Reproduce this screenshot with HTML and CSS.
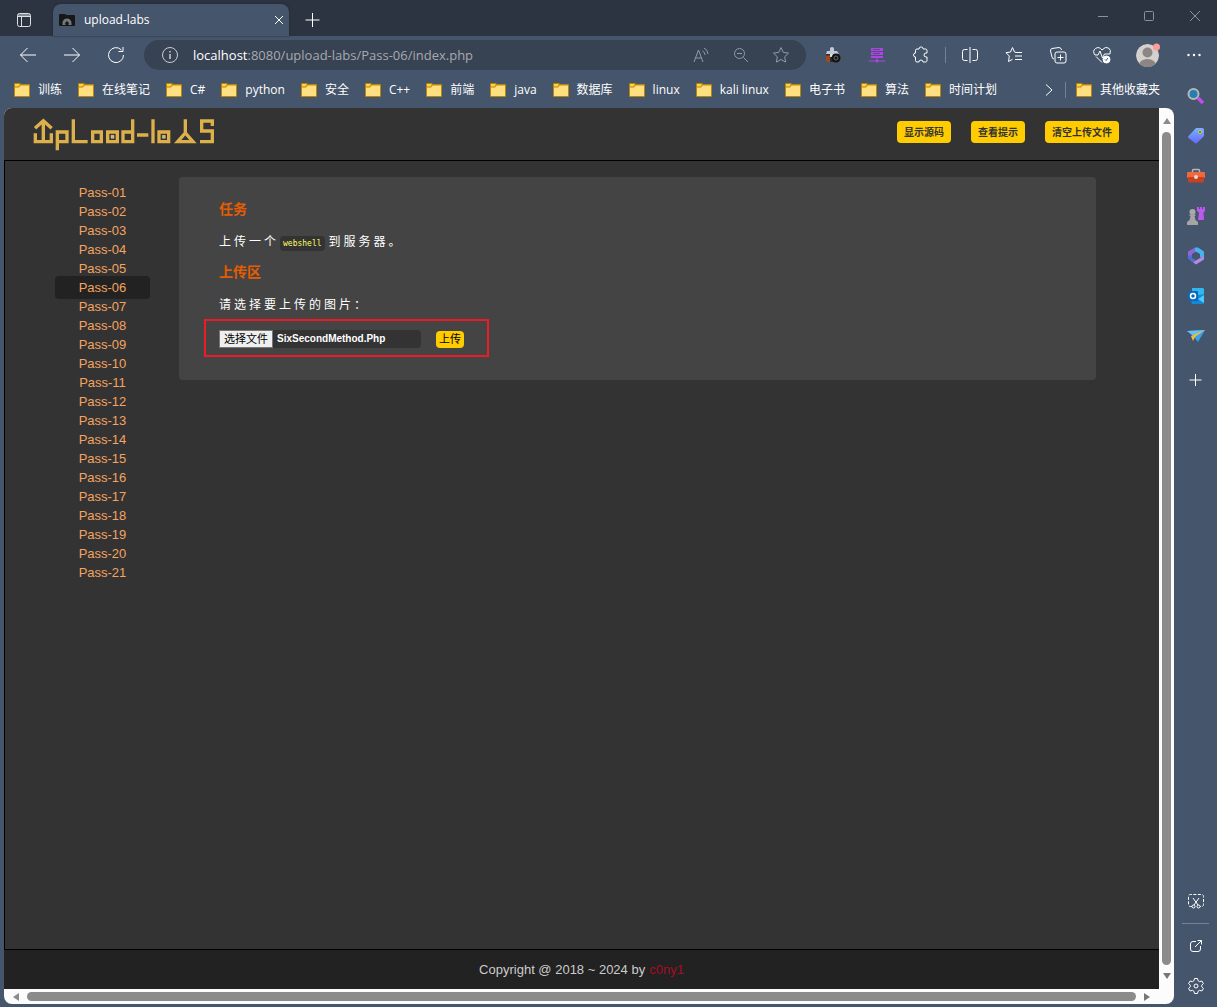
FILE: index.html
```html
<!DOCTYPE html>
<html lang="zh-CN">
<head>
<meta charset="utf-8">
<meta name="viewport" content="width=device-width, initial-scale=1">
<title>upload-labs</title>
<link rel="stylesheet" href="styles.css">
</head>
<body>
<svg class="defs" aria-hidden="true">
  <symbol id="folder" viewBox="0 0 16 14">
    <path d="M0 1q0-1 1-1h5l1 1h8q1 0 1 1V13q0 1-1 1H1q-1 0-1-1z" fill="#b8860b"/>
    <path d="M1 1h4.500v1.500L4.500 3.500H1z" fill="#ffd23c"/>
    <path d="M1 4.500h4L6.500 2.500H15V13H1z" fill="#ffdf80"/>
  </symbol>
</svg>

<header class="tabstrip">
  <button class="icon-btn workspace" aria-label="标签页操作"><svg width="16" height="16" viewBox="0 0 16 16"><rect x="1.500" y="1.500" width="13" height="13" rx="2"/><path d="M2 3h12M2 4.500h12M5.500 5v9"/></svg></button>
  <div class="tab">
    <svg width="16" height="14" viewBox="0 0 16 14" class="solid"><path d="M0 2q0-1 1-1h5l1 1h8q1 0 1 1v9q0 1-1 1H1q-1 0-1-1z" fill="#15171a"/><path d="M3.500 12V10a4.500 4.500 0 0 1 9 0v2h-3v-1.500h1L8 8l-2.500 2.500h1V12z" fill="#777"/></svg>
    <span class="tab-title">upload-labs</span>
    <button class="tab-close" aria-label="关闭标签页"><svg width="10" height="10" viewBox="0 0 10 10"><path d="M1 1l8 8M9 1l-8 8"/></svg></button>
  </div>
  <button class="icon-btn new-tab" aria-label="新建标签页"><svg width="16" height="16" viewBox="0 0 16 16"><path d="M7.500 1v14M0.500 8h14"/></svg></button>
  <div class="window-controls">
    <button aria-label="最小化"><svg width="12" height="12" viewBox="0 0 12 12"><path d="M1 6.500h10"/></svg></button>
    <button aria-label="最大化"><svg width="12" height="12" viewBox="0 0 12 12"><rect x="1.500" y="1.500" width="9" height="9" rx="1"/></svg></button>
    <button aria-label="关闭"><svg width="12" height="12" viewBox="0 0 12 12"><path d="M1 1l10 10M11 1L1 11"/></svg></button>
  </div>
</header>

<div class="toolbar">
  <button class="icon-btn" aria-label="后退"><svg width="18" height="18" viewBox="0 0 18 18"><path d="M17 9H1.500M8.500 2l-7 7 7 7"/></svg></button>
  <button class="icon-btn" aria-label="前进"><svg width="18" height="18" viewBox="0 0 18 18"><path d="M1 9h15.500M9.500 2l7 7-7 7"/></svg></button>
  <button class="icon-btn" aria-label="刷新"><svg width="18" height="18" viewBox="0 0 18 18"><path d="M16.500 9A7.500 7.500 0 1 1 14.500 4M16 1v4.500h-4.500"/></svg></button>
  <div class="address">
    <svg class="site-info" width="18" height="18" viewBox="0 0 18 18"><circle cx="9" cy="9" r="7.500"/><path d="M9 8v5M9 5v1.500" stroke-width="1.500"/></svg>
    <p class="url"><b>localhost</b>:8080/upload-labs/Pass-06/index.php</p>
    <button aria-label="朗读此页"><svg width="16" height="16" viewBox="0 0 16 16"><path d="M1 15L5.500 3 10 15M2.500 11h6M9.500 4a4 4 0 0 1 2.500 4M11 1a7 7 0 0 1 4 6"/></svg></button>
    <button aria-label="缩放"><svg width="16" height="16" viewBox="0 0 16 16"><circle cx="6.500" cy="6.500" r="5"/><path d="M4 6.500h5M10.500 10.500l4.500 4.500"/></svg></button>
    <button aria-label="收藏"><svg width="18" height="18" viewBox="0 0 18 18"><path d="M9 1.500l2.300 4.900 5.200.7-3.800 3.700.9 5.300L9 13.500l-4.600 2.600.9-5.300L1.500 7.100l5.200-.7z"/></svg></button>
  </div>
  <div class="extensions">
    <button class="icon-btn" aria-label="相机扩展"><svg class="solid" width="16" height="16" viewBox="0 0 16 16"><path d="M5 1.500Q5 0 7 0t2 1.500V4h3l2 3H1l1-3h3z" fill="#c3c9da"/><path d="M1 7h13v7q0 1-1 1H2q-1 0-1-1z" fill="#332a2a"/><path d="M1 8.500h4V15H2q-1 0-1-1z" fill="#984b20"/><path d="M5 7h3v3H5z" fill="#d9deea"/><circle cx="11" cy="11" r="4.500" fill="#151515"/><circle cx="11" cy="11" r="2" fill="none" stroke="#666"/></svg></button>
    <button class="icon-btn" aria-label="代理扩展"><svg class="solid" width="16" height="16" viewBox="0 0 16 16"><path d="M2 1h12v3H2zM2 5h12v3H2zM2 9h12v2H2zM7.500 11h1v2h-1zM0 13.500h16v1H0z" fill="#ad45e6"/><circle cx="8" cy="14" r="1.500" fill="#ad45e6"/><path d="M4 2.500h7M4 6.500h7" stroke="#68408f"/></svg></button>
    <button class="icon-btn" aria-label="扩展"><svg width="18" height="18" viewBox="0 0 18 18"><path d="M3.500 4.500q0-1.500 1.500-1.500h2a2.100 2.100 0 0 1 4.200 0h2.300q1.500 0 1.500 1.500V7h-1a2 2 0 0 0 0 4h1v3.500q0 1.500-1.500 1.500H11a2 2 0 0 0-4 0H5q-1.500 0-1.500-1.500V11a2 2 0 0 1 0-4z"/></svg></button>
  </div>
  <span class="divider"></span>
  <div class="browser-tools">
    <button class="icon-btn" aria-label="分屏"><svg width="18" height="18" viewBox="0 0 18 18"><path d="M6.500 3.500h-3q-2 0-2 2v7q0 2 2 2h3M11.500 3.500h3q2 0 2 2v7q0 2-2 2h-3M9 1v16"/></svg></button>
    <button class="icon-btn" aria-label="收藏夹"><svg width="18" height="18" viewBox="0 0 18 18"><path d="M11 6.500L9.500 6 7.500 1.500 5.500 6l-4.500.7L4.300 10l-.8 5.500 4-2.200M11 6.500h6M10 10h7M10 13.500h7"/></svg></button>
    <button class="icon-btn" aria-label="集锦"><svg width="18" height="18" viewBox="0 0 18 18"><path d="M5 13q-1.500 0-2-2L1.500 5q-.3-2 1.500-2.500L10 1.500q2 0 2.500 2.500"/><rect x="6" y="6" width="11" height="11" rx="2"/><path d="M11.500 8.500v6M8.500 11.500h6"/></svg></button>
    <button class="icon-btn" aria-label="浏览器概要"><svg width="18" height="18" viewBox="0 0 18 18"><path d="M9 4Q6 0 2.500 2.500T2 9h3l2-4 2.500 7 2-4H17q1.500-4-1.500-6T9 4M3 10.500l6 6"/><circle cx="13.500" cy="13.500" r="3.500" fill="#fff"/><path d="M12 13.500l1 1 2-2.500" stroke="#45556b"/></svg></button>
    <button class="icon-btn profile" aria-label="用户资料"><svg class="solid" width="24" height="24" viewBox="0 0 24 24"><defs><clipPath id="face"><circle cx="11.500" cy="12.500" r="11.500"/></clipPath></defs><g clip-path="url(#face)"><circle cx="11.500" cy="12.500" r="11.500" fill="#d3d0cd"/><circle cx="11.500" cy="9.500" r="5" fill="#8b8683"/><ellipse cx="11.500" cy="22" rx="8.500" ry="6" fill="#8b8683"/></g><circle cx="20.500" cy="4" r="3.500" fill="#ff9c96"/></svg></button>
    <button class="icon-btn" aria-label="更多"><svg class="solid" width="16" height="16" viewBox="0 0 16 16"><g fill="#fff"><circle cx="2.500" cy="8" r="1.200"/><circle cx="8" cy="8" r="1.200"/><circle cx="13.500" cy="8" r="1.200"/></g></svg></button>
  </div>
</div>

<div class="workspace-row">
  <div class="content">
    <nav class="bookmarks" aria-label="收藏夹栏">
      <a href="#"><svg><use href="#folder"/></svg>训练</a>
      <a href="#"><svg><use href="#folder"/></svg>在线笔记</a>
      <a href="#"><svg><use href="#folder"/></svg>C#</a>
      <a href="#"><svg><use href="#folder"/></svg>python</a>
      <a href="#"><svg><use href="#folder"/></svg>安全</a>
      <a href="#"><svg><use href="#folder"/></svg>C++</a>
      <a href="#"><svg><use href="#folder"/></svg>前端</a>
      <a href="#"><svg><use href="#folder"/></svg>java</a>
      <a href="#"><svg><use href="#folder"/></svg>数据库</a>
      <a href="#"><svg><use href="#folder"/></svg>linux</a>
      <a href="#"><svg><use href="#folder"/></svg>kali linux</a>
      <a href="#"><svg><use href="#folder"/></svg>电子书</a>
      <a href="#"><svg><use href="#folder"/></svg>算法</a>
      <a href="#"><svg><use href="#folder"/></svg>时间计划</a>
      <div class="bookmarks-end">
        <button aria-label="更多收藏"><svg width="8" height="12" viewBox="0 0 8 12"><path d="M1 0.500L7 6l-6 5.500"/></svg></button>
        <span class="divider"></span>
        <a href="#"><svg><use href="#folder"/></svg>其他收藏夹</a>
      </div>
    </nav>

    <div class="viewport">
      <div class="page">
        <div class="page-head">
          <a href="#" class="logo" aria-label="upload-labs">
            <svg width="184" height="35" viewBox="96 50 552 105">
              <g fill="none" stroke="#ddb04b" stroke-width="10">
                <path d="M106 99v25h48V99M130 62v62M105 84l25-23 25 23"/>
                <path d="M172 150V95h29v29h-29"/>
                <path d="M220 57v67h43"/>
                <path d="M278 95h26v29h-26z"/>
                <path d="M323 95h29v29h-29z"/>
                <path d="M398 57v67h-29V95h29"/>
                <path d="M411 104h34M459 57v72"/>
                <path d="M477 95h29v29h-29z"/>
                <path d="M556 57v40M533 124l23-26 23 26z"/>
                <path d="M637 77V62h-32v30h32v32h-37"/>
              </g>
              <path d="M333 105h9v9h-9zM487 105h9v9h-9z" fill="#ddb04b"/>
            </svg>
          </a>
          <div class="head-actions">
            <button>显示源码</button>
            <button>查看提示</button>
            <button>清空上传文件</button>
          </div>
        </div>

        <div class="page-body">
          <ul class="menu">
            <li><a href="#">Pass-01</a></li>
            <li><a href="#">Pass-02</a></li>
            <li><a href="#">Pass-03</a></li>
            <li><a href="#">Pass-04</a></li>
            <li><a href="#">Pass-05</a></li>
            <li><a href="#" class="current" aria-current="page">Pass-06</a></li>
            <li><a href="#">Pass-07</a></li>
            <li><a href="#">Pass-08</a></li>
            <li><a href="#">Pass-09</a></li>
            <li><a href="#">Pass-10</a></li>
            <li><a href="#">Pass-11</a></li>
            <li><a href="#">Pass-12</a></li>
            <li><a href="#">Pass-13</a></li>
            <li><a href="#">Pass-14</a></li>
            <li><a href="#">Pass-15</a></li>
            <li><a href="#">Pass-16</a></li>
            <li><a href="#">Pass-17</a></li>
            <li><a href="#">Pass-18</a></li>
            <li><a href="#">Pass-19</a></li>
            <li><a href="#">Pass-20</a></li>
            <li><a href="#">Pass-21</a></li>
          </ul>
          <main class="panel">
            <h3>任务</h3>
            <p>上传一个<code>webshell</code>到服务器。</p>
            <h3>上传区</h3>
            <form>
              <p>请选择要上传的图片：</p>
              <div class="upload-row">
                <label class="file"><input type="file"><span class="file-btn">选择文件</span><span class="file-name">SixSecondMethod.Php</span></label>
                <button type="button">上传</button>
              </div>
            </form>
          </main>
        </div>

        <footer class="page-foot">Copyright @ 2018 ~ 2024 by <a href="#">c0ny1</a></footer>
      </div>

      <div class="scroll-y"><svg viewBox="0 0 8 6"><path d="M4 0l4 6H0z"/></svg><span class="thumb"></span><svg viewBox="0 0 8 6"><path d="M4 6l4-6H0z"/></svg></div>
      <div class="scroll-x"><svg viewBox="0 0 6 8"><path d="M0 4l6-4v8z"/></svg><span class="thumb"></span><svg viewBox="0 0 6 8"><path d="M6 4L0 0v8z"/></svg></div>
    </div>
  </div>

  <aside class="sidebar" aria-label="侧边栏">
    <button aria-label="搜索"><svg class="solid" width="18" height="18" viewBox="0 0 18 18"><path d="M11 11l5 5" stroke="#c54bf0" stroke-width="3.500"/><circle cx="6.500" cy="7" r="5" fill="#2380b5" stroke="#b9b7b5" stroke-width="2"/></svg></button>
    <button aria-label="购物"><svg class="solid" width="18" height="18" viewBox="0 0 18 18"><defs><linearGradient id="tag" x1="0" y1="0" x2="0" y2="1"><stop stop-color="#75b5ff"/><stop offset="1" stop-color="#6868fa"/></linearGradient></defs><path d="M9 1h6q2 0 2 2v6l-7 7q-1 1-2 0L1.500 11q-1-1 0-2z" fill="url(#tag)"/><circle cx="13" cy="5" r="1.500" fill="#516079" stroke="#efc42e"/></svg></button>
    <button aria-label="工具"><svg class="solid" width="18" height="18" viewBox="0 0 18 18"><path d="M5.500 5V3.500q0-1 1-1h5q1 0 1 1V5" fill="none" stroke="#b7b7b7" stroke-width="1.500"/><rect y="5" width="18" height="6" rx="1" fill="#f0683e"/><path d="M1 10h16v4q0 1.500-1.500 1.500h-13Q1 15.500 1 14z" fill="#c9401f"/><circle cx="9" cy="10" r="2" fill="#ddd"/></svg></button>
    <button aria-label="游戏"><svg class="solid" width="18" height="18" viewBox="0 0 18 18"><path d="M10 0h2v2h1V0h2v2h1V0h2v4l-1.500 1.500L17 13h-6l1-7.500L10 4z" fill="#bd58ef"/><circle cx="5.500" cy="5" r="3" fill="#aaa"/><path d="M2.500 7.500h6v1.500H7.500l1 4 2.500 2v3H0v-3l2.500-2 1-4h-1z" fill="#a5a5a5"/></svg></button>
    <button aria-label="Microsoft 365"><svg class="solid" width="18" height="18" viewBox="0 0 18 18"><path d="M8 .5L1 4.500v7l4 2V7l6-3.500z" fill="#8b66d5"/><path d="M8 .5h3l6 4V12l-4-2V7L8 4z" fill="#45b4ec"/><path d="M3 13l6 4.500 8-5V9l-4 2-4 2.500-4-2z" fill="#b28be0"/><path d="M1 9l4-1v3l4 2.500-3 2-5-4z" fill="#526dd0"/></svg></button>
    <button aria-label="Outlook"><svg class="solid" width="18" height="18" viewBox="0 0 18 18"><path d="M5 1h11l1 1v6H5z" fill="#31b6f1"/><path d="M3 10l14-3v9q0 1-1 1H5z" fill="#1687d8"/><path d="M17 8v8l-6-4z" fill="#4dccf7"/><rect x="1" y="4" width="10" height="10" rx="1" fill="#0869ba"/><circle cx="6" cy="9" r="2.500" fill="none" stroke="#fff" stroke-width="1.500"/></svg></button>
    <button aria-label="拖放"><svg class="solid" width="18" height="18" viewBox="0 0 18 18"><path d="M0 4l18-1-7 12-4-5z" fill="#35a1ef"/><path d="M0 4l18-1L7 9z" fill="#63c2ef"/><path d="M18 3L4 9l2 5 2-4z" fill="#f5b83b"/></svg></button>
    <button class="customize" aria-label="自定义"><svg width="14" height="14" viewBox="0 0 14 14"><path d="M6.500 1v12M0.500 7h12"/></svg></button>
    <div class="sidebar-end">
      <button aria-label="截图"><svg width="18" height="18" viewBox="0 0 18 18"><path d="M5 14.500H3.500q-2 0-2-2v-8q0-2 2-2h11q2 0 2 2v8q0 2-2 2H13" stroke-dasharray="3 1.500"/><path d="M6 6l5 7M12 6l-5 7"/><circle cx="6.500" cy="14.500" r="1.500"/><circle cx="11.500" cy="14.500" r="1.500"/></svg></button>
      <hr>
      <button aria-label="在新窗口打开"><svg width="14" height="14" viewBox="0 0 14 14"><path d="M7 2.500H4q-2.500 0-2.500 2.500v5q0 2.500 2.500 2.500h5q2.500 0 2.500-2.500V7M8.500 1.500h4v4M12.500 1.500L6 8"/></svg></button>
      <button aria-label="设置"><svg width="18" height="18" viewBox="0 0 18 18"><path d="M7.500 1.500h3l.6 2.300 1.500.9 2.300-.7 1.500 2.600L14.700 8.200v1.600l1.700 1.600-1.500 2.600-2.300-.7-1.500.9-.6 2.300h-3l-.6-2.300-1.500-.9-2.300.7-1.500-2.600 1.700-1.600V8.200L1.600 6.600 3.100 4l2.300.7 1.500-.9z"/><circle cx="9" cy="9" r="2"/></svg></button>
    </div>
  </aside>
</div>
</body>
</html>
```

FILE: styles.css
```css
* { box-sizing: border-box; }

body {
  margin: 0;
  min-height: 100vh;
  display: flex;
  flex-direction: column;
  background: #45556b;
  color: #fff;
  font: 12px/16px "Open Sans", "Noto Sans CJK SC", sans-serif;
}

button {
  margin: 0;
  padding: 0;
  border: 0;
  background: none;
  color: inherit;
  font: inherit;
  display: flex;
  align-items: center;
  justify-content: center;
}

a { color: inherit; text-decoration: none; }

svg { flex: none; fill: none; stroke: currentColor; }
svg.solid { stroke: none; }
.defs { display: none; }

/* Tab strip */
.tabstrip {
  height: 36px;
  display: flex;
  align-items: flex-end;
  background: #2b3440;
}
.icon-btn { width: 44px; height: 32px; }
.workspace { margin: 0 7px 0 2px; color: #dde1e6; }
.tab {
  width: 236px;
  height: 32px;
  padding: 0 4px 0 6px;
  display: flex;
  align-items: center;
  gap: 9px;
  border-radius: 8px 8px 0 0;
  background: #45556b;
  box-shadow: 0 0 2px #1c232c;
}
.tab-title { flex: 1; }
.tab-close { width: 12px; height: 20px; }
.new-tab { margin-left: 2px; }
.window-controls {
  margin: 0 -1px 0 auto;
  align-self: flex-start;
  display: flex;
  color: #8b929b;
}
.window-controls button { width: 46px; height: 32px; }

/* Toolbar */
.toolbar {
  padding: 4px 1px 2px 6px;
  display: flex;
  align-items: center;
}
.toolbar .icon-btn { height: 30px; }
.address {
  flex: 1;
  height: 30px;
  margin: 0 5px 0 6px;
  padding: 0 5px 0 17px;
  display: flex;
  align-items: center;
  border-radius: 15px;
  background: #374253;
}
.address button { width: 40px; height: 30px; color: #929aa5; }
.site-info { color: #c9cdd3; }
.url {
  flex: 1;
  margin: 0 0 0 14px;
  color: #a6aaaf;
  font-size: 13px;
  line-height: 20px;
}
.url b { color: #fff; font-weight: 400; }
.extensions, .browser-tools { display: flex; }
.toolbar .profile { width: 48px; }
.divider { width: 1px; height: 16px; margin: 0 2px; background: #748196; }

/* Content column and sidebar */
.workspace-row { flex: 1; display: flex; }
.content {
  flex: 1;
  min-width: 0;
  display: flex;
  flex-direction: column;
  padding: 0 0 3px 4px;
}
.bookmarks {
  height: 36px;
  padding: 0 14px 0 10px;
  display: flex;
  align-items: center;
  gap: 16px;
  white-space: nowrap;
}
.bookmarks a { display: flex; align-items: center; gap: 8px; }
.bookmarks a svg { width: 16px; height: 14px; stroke: none; }
.bookmarks-end { margin-left: auto; display: flex; align-items: center; gap: 8px; }
.bookmarks-end button { width: 12px; height: 20px; }

.viewport {
  flex: 1;
  display: grid;
  grid-template: 1fr 15px / 1fr 15px;
  border-radius: 8px;
  overflow: hidden;
  background: #fcfcfc;
}
.scroll-y, .scroll-x {
  display: flex;
  align-items: center;
  gap: 8px;
  color: #8b8b8b;
}
.scroll-y { flex-direction: column; padding: 10px 0; }
.scroll-x { padding: 0 9px; }
.viewport .scroll-y svg { width: 8px; height: 6px; }
.viewport .scroll-x svg { width: 6px; height: 8px; }
.viewport .thumb { flex: 1; border-radius: 5px; background: #8b8b8b; }
.scroll-y .thumb { width: 9px; }
.scroll-x .thumb { height: 9px; }
.viewport .thumb + svg { fill: #777; }
.scroll-y svg, .scroll-x svg { fill: currentColor; stroke: none; }

/* Web page */
.page {
  display: flex;
  flex-direction: column;
  background: #333;
  font-family: "Liberation Sans", "Noto Sans CJK SC", sans-serif;
}
.page-head {
  height: 53px;
  padding: 0 40px 0 28px;
  display: flex;
  align-items: center;
  justify-content: space-between;
  border-bottom: 1px solid #000;
}
.logo svg { display: block; }
.head-actions { display: flex; gap: 20px; padding-bottom: 4px; }
.head-actions button {
  height: 22px;
  padding: 1px 7px 0;
  border-radius: 4px;
  background: #fc0;
  color: #333;
  font-size: 10px;
  font-weight: 700;
}
.page-body {
  flex: 1;
  padding: 16px 63px 16px 50px;
  display: flex;
  align-items: flex-start;
  gap: 29px;
  border-left: 1px solid #000;
}
.menu {
  width: 95px;
  margin: 0;
  padding: 6px 0 0;
  list-style: none;
  color: #f4a460;
  font-size: 13px;
}
.menu li { height: 19px; display: flex; align-items: center; }
.menu a { flex: 1; padding: 4px 0; border-radius: 4px; line-height: 15px; text-align: center; }
.menu .current { background: #222; }

.panel {
  flex: 1;
  padding: 24px 40px 23px;
  border-radius: 4px;
  background: #444;
}
.panel h3 { margin: 0 0 17px; color: #e65c00; font-size: 14px; line-height: 16px; }
.panel p { margin: 0 0 14px; letter-spacing: 3px; line-height: 16px; }
.panel code {
  margin: 0 4px 0 1px;
  padding: 3px;
  border-radius: 4px;
  background: #333;
  color: #ff6;
  font: 8px/12px "DejaVu Sans Mono", monospace;
  letter-spacing: 0;
}
.upload-row {
  width: 285px;
  height: 38px;
  margin: -8px 0 0 -15px;
  padding: 2px 13px 0;
  display: flex;
  align-items: center;
  gap: 15px;
  border: 2px solid #ed1c24;
}
.file {
  position: relative;
  width: 202px;
  height: 18px;
  display: flex;
  align-items: center;
  gap: 4px;
  border-radius: 4px;
  background: #333;
  font-size: 11px;
}
.file input { position: absolute; inset: 0; width: 100%; opacity: 0; }
.file-btn {
  padding: 0 4px;
  border: 1px solid #767676;
  background: #efefef;
  color: #000;
}
.file-name { font-size: 10px; font-weight: 700; }
.upload-row button {
  width: 28px;
  height: 17px;
  border-radius: 4px;
  background: #fc0;
  color: #000;
  font-size: 11px;
}
.page-foot {
  height: 40px;
  display: flex;
  align-items: center;
  justify-content: center;
  gap: 4px;
  border-top: 1px solid #000;
  background: #222;
  color: #ccc;
  font-size: 13px;
}
.page-foot a { color: #a50d24; }

/* Sidebar */
.sidebar {
  width: 43px;
  padding: 4px 0 1px;
  display: flex;
  flex-direction: column;
}
.sidebar button { width: 43px; height: 40px; }
.sidebar .customize { margin-top: 4px; }
.sidebar-end { margin-top: auto; }
.sidebar hr { margin: 2px 8px; border: 0; height: 1px; background: #748196; }
```
